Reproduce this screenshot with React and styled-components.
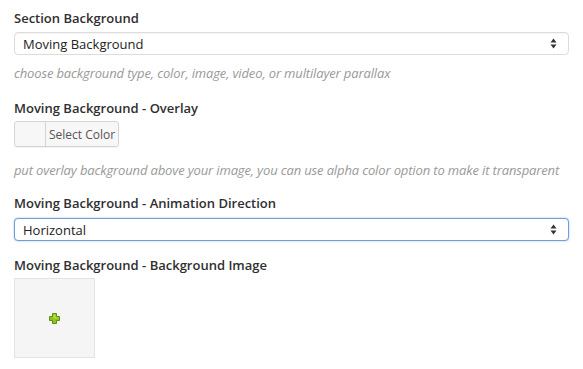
import styled, { createGlobalStyle } from 'styled-components';

const GlobalStyle = createGlobalStyle`
  html, body {
    margin: 0;
    padding: 0;
    background: #fff;
  }
  body {
    font-family: "Open Sans", "Liberation Sans", sans-serif;
    font-size: 13px;
    color: #333;
  }
`;

const ScPanel = styled.div`
  display: flex;
  flex-direction: column;
  padding: 9px 14px 0 14px;
  width: 555px;
`;

const ScField = styled.div`
  display: flex;
  flex-direction: column;
  margin-bottom: ${({ $gap }) => $gap || 0}px;
`;

const ScLabel = styled.div`
  font-weight: 600;
  font-size: 13px;
  line-height: 18px;
  color: #2f2f2f;
  margin-bottom: ${({ $gap }) => $gap || 4}px;
`;

const ScSelectWrap = styled.div`
  position: relative;
  height: 23px;
`;

const ScSelect = styled.select`
  appearance: none;
  -webkit-appearance: none;
  width: 100%;
  height: 23px;
  box-sizing: border-box;
  margin: 0;
  padding: 0 24px 0 8px;
  font-family: "Open Sans", "Liberation Sans", sans-serif;
  font-size: 13px;
  color: #222;
  background: #fff;
  border: 1px solid ${({ $focused }) => ($focused ? '#6f9fd4' : '#dcdcdc')};
  border-radius: 4px;
  box-shadow: ${({ $focused }) =>
    $focused ? '0 0 2px rgba(80, 140, 210, 0.6)' : 'inset 0 1px 1px rgba(0,0,0,0.04)'};
  outline: none;
`;

const ScArrows = styled.svg`
  position: absolute;
  right: 12px;
  top: 6px;
  pointer-events: none;
`;

const ScDescription = styled.div`
  font-style: italic;
  font-size: 13px;
  letter-spacing: -0.14px;
  line-height: 18px;
  color: #999;
  white-space: nowrap;
  margin-top: ${({ $gap }) => $gap || 0}px;
`;

const ScColorButton = styled.button`
  display: flex;
  align-items: stretch;
  width: 105px;
  height: 26px;
  padding: 0;
  margin: 0;
  box-sizing: border-box;
  border: 1px solid #d4d4d4;
  border-radius: 3px;
  background: #f7f7f7;
  box-shadow: 0 1px 0 rgba(0,0,0,0.05);
  overflow: hidden;
  cursor: pointer;
`;

const ScSwatch = styled.span`
  width: 30px;
  background: #f7f7f7;
  border-right: 1px solid #d4d4d4;
`;

const ScButtonText = styled.span`
  flex: 1;
  display: flex;
  align-items: center;
  justify-content: center;
  font-family: "Open Sans", "Liberation Sans", sans-serif;
  font-size: 12px;
  color: #555;
  background: #f7f7f7;
`;

const ScImageBox = styled.div`
  width: 81px;
  height: 80px;
  box-sizing: border-box;
  border: 1px solid #e3e3e3;
  background: #f5f5f5;
  display: flex;
  align-items: center;
  justify-content: center;
`;

const Arrows = () => (
  <ScArrows width="7" height="11" viewBox="0 0 7 11">
    <path d="M3.5 0.5 L6.5 4.5 H0.5 Z" fill="#333" />
    <path d="M3.5 10.5 L6.5 6.5 H0.5 Z" fill="#333" />
  </ScArrows>
);

const SelectField = ({ value, focused }) => (
  <ScSelectWrap>
    <ScSelect $focused={focused} defaultValue={value}>
      <option>{value}</option>
    </ScSelect>
    <Arrows />
  </ScSelectWrap>
);

const PlusIcon = () => (
  <svg width="11" height="11" viewBox="0 0 11 11">
    <path
      d="M3.5 0.5 H7.5 V3.5 H10.5 V7.5 H7.5 V10.5 H3.5 V7.5 H0.5 V3.5 H3.5 Z"
      fill="#8bc41a"
      stroke="#5f8f0e"
      strokeWidth="1"
      strokeLinejoin="round"
    />
    <path d="M4.5 1.5 H6.5 V4.5 H9.5 V5.5 H4.5 Z" fill="#b5e04a" />
  </svg>
);

export default function App() {
  return (
    <>
      <GlobalStyle />
      <ScPanel>
        <ScField $gap={17}>
          <ScLabel $gap={5}>Section Background</ScLabel>
          <SelectField value="Moving Background" />
          <ScDescription $gap={9}>
            choose background type, color, image, video, or multilayer parallax
          </ScDescription>
        </ScField>

        <ScField $gap={15}>
          <ScLabel $gap={4}>Moving Background - Overlay</ScLabel>
          <ScColorButton type="button">
            <ScSwatch />
            <ScButtonText>Select Color</ScButtonText>
          </ScColorButton>
          <ScDescription $gap={14}>
            put overlay background above your image, you can use alpha color option to make it transparent
          </ScDescription>
        </ScField>

        <ScField $gap={15}>
          <ScLabel $gap={6}>Moving Background - Animation Direction</ScLabel>
          <SelectField value="Horizontal" focused />
        </ScField>

        <ScField>
          <ScLabel $gap={4}>Moving Background - Background Image</ScLabel>
          <ScImageBox>
            <PlusIcon />
          </ScImageBox>
        </ScField>
      </ScPanel>
    </>
  );
}
